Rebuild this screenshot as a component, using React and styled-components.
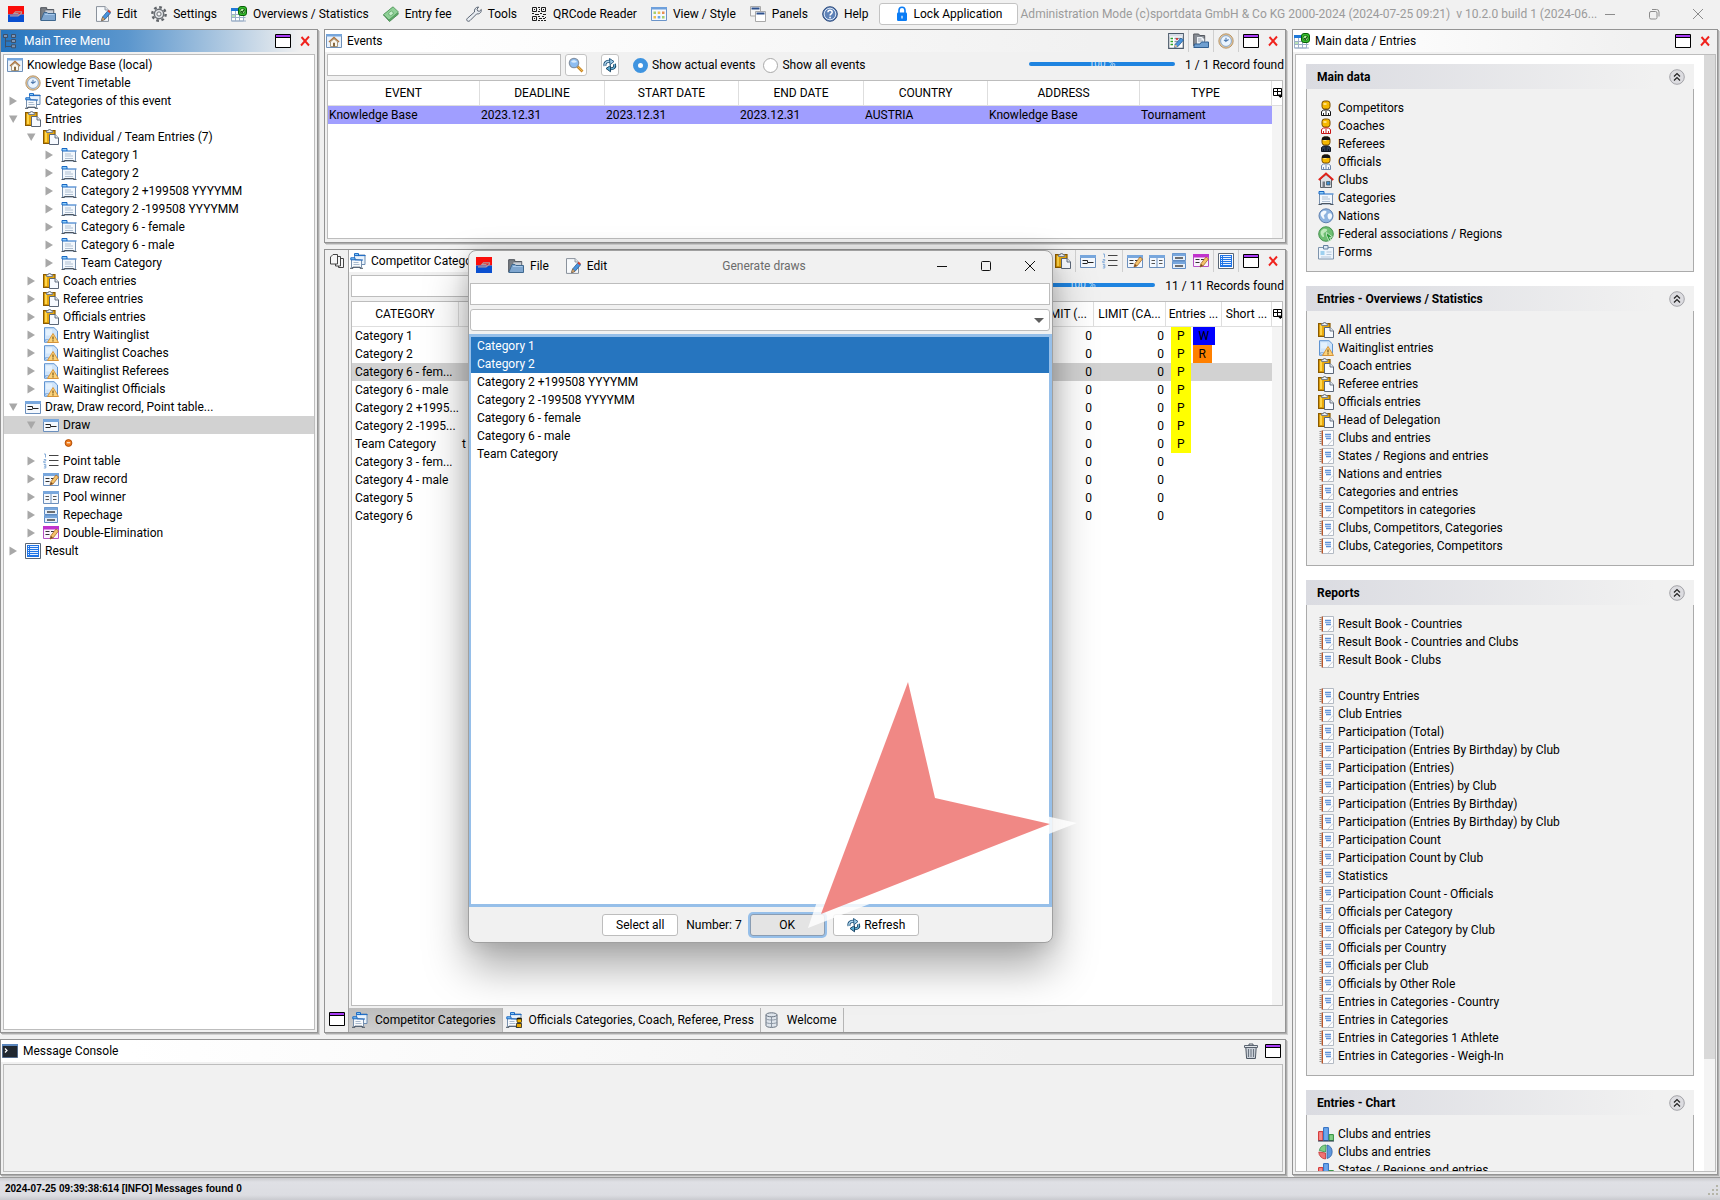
import React, { useState } from 'react';
import styled, { createGlobalStyle, css } from 'styled-components';

const FONT = 'Roboto, "Open Sans", sans-serif';

const GlobalStyle = createGlobalStyle`
    * {
        box-sizing: border-box;
    }
    body {
        margin: 0;
        background: #f1f1f1;
        color: #000;
        font-family: ${FONT};
        font-size: 12px;
        line-height: 18px;
    }
    button, input, select {
        font: inherit;
        color: inherit;
    }
    ul {
        margin: 0;
        padding: 0;
        list-style: none;
    }
`;

/* ---------- icons ---------- */

const pencil = (
    <g>
        <path d="M7 14l1-3.5L13 4l2.5 2L10 13z" fill="#f3c46b" stroke="#a8672a" strokeWidth=".8" />
        <path d="M7 14l1-3 2 1.6z" fill="#7a4a20" />
    </g>
);

const folderShape = (
    <g>
        <path d="M1.500 3v11h13V4.500" fill="#f3f8fd" stroke="#7890ad" />
        <path d="M1 1.500h5v2.500H1z" fill="#8fd0fb" stroke="#1767c4" />
        <path d="M6 4h9.500" stroke="#1767c4" />
        <path d="M4 7h6M4 9h8M4 11.500h8" stroke="#b0c0d2" />
        <path d="M.5 14.500h3v-1h9v1h3" fill="none" stroke="#4b5560" />
    </g>
);

const windowFrame = (color) => (
    <g>
        <path d="M.5 2.500h15v12H.5z" fill="#f4f8fd" stroke="#6b8fbd" />
        <path d="M0 2h16v3H0z" fill={color} />
    </g>
);

const person = (hair, body, detail) => (
    <g>
        <rect x="4" y="1" width="8" height="8" rx="2.500" fill="#f5b800" stroke="#7a4d00" />
        <path d="M5.500 3h3v2h-3z" fill="#ffe07a" />
        {hair && <path d="M4 4V2l2-1.500h4L12 2v2z" fill="#141414" />}
        <path d="M6.500 9.500h3v1h-3z" fill="#b07700" />
        <path d="M3.500 15.500v-4l2-1.500h5l2 1.500v4z" fill={body} stroke={detail} />
        <path d="M8 11v4M5.500 13v2.500M10.500 13v2.500" stroke={detail} strokeWidth=".9" />
    </g>
);

const clipboard = (
    <g>
        <rect x=".6" y="1.600" width="11.400" height="12.800" fill="#e9a90d" stroke="#8a5a00" strokeWidth="1.200" />
        <path d="M2 3h2v10H2z" fill="#ffd54a" />
        <path d="M3.500 3.500V1.800h1.700L5.600.6h2l.4 1.200h1.700v1.700z" fill="#eef2f7" stroke="#6e7784" strokeWidth=".9" />
        <path d="M6.500 5.500h5.500L15.500 9v6.500h-9z" fill="#f7faff" stroke="#5b6677" />
        <path d="M12 5.500V9h3.500" fill="#dfe6f0" stroke="#5b6677" strokeWidth=".9" />
    </g>
);

const categories = (
    <g>
        <path d="M4.500 11.500V2h10.500v9.500z" fill="#eaf3fc" stroke="#6d8db3" />
        <path d="M4.500.6h4v2h-4z" fill="#8fd0fb" stroke="#1767c4" />
        <path d="M8 2.600h7.500" stroke="#1767c4" />
        <path d="M1.500 6v8.500h10V7z" fill="#f7fafd" stroke="#7890ad" />
        <path d="M.8 4.800h4.200v2H.8z" fill="#8fd0fb" stroke="#1767c4" />
        <path d="M5 7h8" stroke="#1767c4" />
        <path d="M3.500 9.500h5M3.500 11.500h6" stroke="#a9bace" />
        <path d="M0 15.300h3v-1.100h7v1.100h3" fill="none" stroke="#4b5560" />
    </g>
);

const shapes = {
    logo: (
        <g>
            <path d="M0 0h16v8.500H0z" fill="#fb0d0a" />
            <path d="M0 8.500h16V16H0z" fill="#0a4fd0" />
            <path d="M2 9.800h8l3.500-2.600V5.800H7.500L5.800 7.600h4.700" fill="none" stroke="#b59a9c" strokeWidth="1.200" />
        </g>
    ),
    folder: (
        <g>
            <path d="M.7 14V1.700h6v1.800h7V8" fill="#7b7f86" stroke="#4c5158" />
            <path d="M5 4h8.500v6H5z" fill="#c9ced6" stroke="#6d737b" strokeWidth=".7" />
            <path d="M.8 14.500L4 6.500h3l1 1h7.500V14.500z" fill="#7fa6cf" stroke="#3f688f" />
            <path d="M5 8.500h9.500" stroke="#a7c9ec" />
        </g>
    ),
    edit: (
        <g>
            <path d="M1.500.6H10l3.500 3.400v11.400h-12z" fill="#f8fafc" stroke="#8a929c" />
            <path d="M10 .6V4h3.500" fill="#dfe5ec" stroke="#8a929c" strokeWidth=".9" />
            <path d="M6.600 14.600l1-3.600 5.600-6.600 2.600 2.200L10 13.400z" fill="#4a94dd" stroke="#2b5d94" strokeWidth=".8" />
            <path d="M12.500 5.200l1.300-1.500 2 1.800-1.200 1.500z" fill="#d9402c" />
            <path d="M6.600 14.600l1-3.600 2.400 2.400z" fill="#f2c48a" stroke="#8d5a27" strokeWidth=".7" />
        </g>
    ),
    gear: (
        <g fill="none">
            <circle cx="8" cy="8" r="6.700" stroke="#5f6368" strokeWidth="2.400" strokeDasharray="2.700 2.560" />
            <circle cx="8" cy="8" r="4.700" fill="#e3e5e8" stroke="#6c7075" strokeWidth="1.500" />
            <circle cx="8" cy="8" r="2.100" fill="#f8f8f8" stroke="#6c7075" />
        </g>
    ),
    overview: (
        <g>
            <path d="M.5 2.500h12v12.500H.5z" fill="#fff" stroke="#9db0c8" />
            <path d="M0 2h13v3H0z" fill="#1f78d8" />
            <path d="M4.500 5v10M8.500 5v10M12.500 9v6M.5 8.500h14M.5 11.500h14M.5 15h14.500" stroke="#9db0c8" />
            <path d="M1 9h3v2H1z" fill="#b9e3b4" />
            <rect x="7.500" y=".5" width="8" height="9" rx="2.500" fill="#35c22b" stroke="#0a5c08" />
            <circle cx="11.500" cy="5" r="2.600" fill="#baf5a6" stroke="#0a5c08" strokeWidth=".8" />
            <path d="M10 5l1.200 1.500L13.300 3.500" fill="none" stroke="#064a05" strokeWidth="1.200" />
        </g>
    ),
    money: (
        <g>
            <path d="M.5 9L9.500 1.500l6 6.500-9 7.500z" fill="#5fae69" stroke="#3e8049" strokeWidth=".8" />
            <path d="M.5 8.500L10 .8l5.500 5.200-9.500 8z" fill="#8fd097" stroke="#4c9457" strokeWidth=".8" />
            <ellipse cx="8" cy="7.400" rx="2.400" ry="2" transform="rotate(-38 8 7.400)" fill="#c5ecca" stroke="#5aa364" strokeWidth=".7" />
        </g>
    ),
    wrench: (
        <path d="M1.200 14.800c-.9-.9-.6-1.800.2-2.500L8.500 6C8 3.500 9.500 1 12.600 1L11 3.200l.6 1.700 1.700.4L15.300 3.500c.4 3-2 4.900-4.500 4.300L4 14.600c-.8.800-2 1-2.800.2z" fill="#e9edf2" stroke="#5a6472" />
    ),
    qr: (
        <g fill="none" stroke="#1c1c1c">
            <path d="M1.500 1.500h4v4h-4zM10.500 1.500h4v4h-4zM1.500 10.500h4v4h-4z" />
            <path d="M3 3.500h1M12 3.500h1M3 12.500h1M7 1.500h2M8 3.500h1M7 5.500h2M1 7.500h2M4 8.500h4M9 7.500h2M12 8.500h3M7 10.500h2M11 10.500h2M14 11.500h1M8 12.500h3M12 12.500h2M7 14.500h2M10 14.500h2M13 14.500h2" />
        </g>
    ),
    view: (
        <g>
            <path d="M.5 1.500h15v13H.5z" fill="#f5f9fe" stroke="#6b94c9" />
            <path d="M0 1h16v2.500H0z" fill="#6ea0dc" />
            <path d="M2.500 5.500H5V8H2.500zM11 10h2.500v2.500H11z" fill="#a6cf6f" />
            <path d="M6.700 5.500h2.600V8H6.700zM2.500 10H5v2.500H2.500z" fill="#f0c04c" />
            <path d="M11 5.500h2.500V8H11z" fill="#e88f4f" />
            <path d="M6.700 10h2.600v2.500H6.700z" fill="#6aa7e8" />
        </g>
    ),
    panels: (
        <g>
            <path d="M.5.500h10v9.500H.5z" fill="#f6f6f6" stroke="#a9a9a9" />
            <path d="M1.500 2.500h8" stroke="#2b4f8c" strokeWidth="2" />
            <path d="M5.500 5.500h10v10h-10z" fill="#fff" stroke="#a9a9a9" />
            <path d="M6.500 7.500h8" stroke="#2b4f8c" strokeWidth="2" />
        </g>
    ),
    help: (
        <g>
            <circle cx="8" cy="8" r="7.300" fill="#5f83b8" stroke="#2c4a7c" />
            <circle cx="8" cy="8" r="5.800" fill="none" stroke="#dbe6f5" />
            <path d="M5.900 6.300C6 4.900 7 4.300 8 4.300c1.200 0 2.200.7 2.200 1.900 0 1.600-2.100 1.600-2.100 3.300" fill="none" stroke="#fff" strokeWidth="1.500" />
            <path d="M7.300 10.800h1.600v1.400H7.300z" fill="#fff" />
        </g>
    ),
    lock: (
        <g>
            <path d="M5 7V4.300C5 2.500 6.300 1.300 8 1.300s3 1.200 3 3V7" fill="none" stroke="#0a7cf5" strokeWidth="1.600" />
            <rect x="3" y="6.500" width="10" height="8.500" rx="1.200" fill="#0a7cf5" />
            <path d="M8 9.800v2.600" stroke="#fff" strokeWidth="1.200" />
        </g>
    ),
    tree: (
        <g>
            <path d="M2.500 3v11.500M2.500 8H9M2.500 13.500H9" fill="none" stroke="#3e5068" />
            <path d="M.5 1.500h4v3h-4zM8.500 1.500h4v3h-4zM8.500 6.500h4v3h-4zM8.500 11.800h4v3h-4z" fill="#7d95b5" stroke="#3e5068" />
        </g>
    ),
    home: (
        <g>
            <path d="M.5 1.500h15v13H.5z" fill="#e9f2fc" stroke="#6f90b8" />
            <path d="M0 1h16v2.500H0z" fill="#76a5da" />
            <path d="M3 9l5-4.500L13 9" fill="none" stroke="#b0743b" strokeWidth="1.500" />
            <path d="M4.500 8.800L8 5.800l3.500 3v4.700h-7z" fill="#fbf7ee" stroke="#93805f" strokeWidth=".8" />
            <path d="M7 9.800h2v3.700H7z" fill="#8a6a3f" />
        </g>
    ),
    clock: (
        <g>
            <circle cx="8" cy="8" r="7.200" fill="#e5c79d" stroke="#a98657" strokeWidth=".8" />
            <circle cx="8" cy="8" r="5.400" fill="#eaf4fe" stroke="#7fa3cc" strokeWidth=".9" />
            <path d="M8 4.800V8.300L10.600 6.500M8 8.300L6 7" fill="none" stroke="#4d78ad" strokeWidth="1.100" />
        </g>
    ),
    categories,
    officialCategories: (
        <g>
            {categories}
            <rect x="11" y="6" width="4.500" height="4.500" rx="1" fill="#f0b400" stroke="#3a2a00" strokeWidth=".8" />
            <path d="M10.500 15.500v-4h5v4z" fill="#e7a600" stroke="#222" strokeWidth=".8" />
            <path d="M11 6h4.500v1.300H11z" fill="#111" />
        </g>
    ),
    clipboard,
    category: folderShape,
    waiting: (
        <g>
            <path d="M1.500.7H11l3.500 3.300v11.300h-13z" fill="#cfe4fa" stroke="#5e93d1" />
            <path d="M3 2.500h6v6H3z" fill="#e4f1fd" />
            <path d="M2.500 12.500h3v1.500h-3z" fill="#eaf4ff" stroke="#5e93d1" strokeWidth=".6" />
            <path d="M10 6.500l5.500 9h-11z" fill="#fbd27a" stroke="#d98f2b" strokeWidth=".9" />
            <path d="M10 9.500v3M10 13.300v1.200" stroke="#6b4a10" strokeWidth="1.100" />
        </g>
    ),
    draw: (
        <g>
            {windowFrame('#78a7dd')}
            <path d="M2.500 7.500h5M2.500 10.500h5M7.500 7.500V9.500h6" fill="none" stroke="#222" />
        </g>
    ),
    list: (
        <g>
            <path d="M1 1h1.500v3.500M.8 6.500h2v1.500h-2v1.700h2M.8 11.500h2v3.500h-2M1 13.200h1.800" fill="none" stroke="#86add9" />
            <path d="M6 2.500h9.500M6 7.500h9.500M6 12.500h9.500" stroke="#444" />
        </g>
    ),
    record: (
        <g>
            {windowFrame('#78a7dd')}
            <path d="M2.500 7.500h4M2.500 10.500h4M8 7.500h3" stroke="#333" />
            {pencil}
        </g>
    ),
    pool: (
        <g>
            {windowFrame('#78a7dd')}
            <path d="M8 5v9.500" stroke="#6b8fbd" />
            <path d="M2.500 7.500h3.500M2.500 10.500h3.500M10 7.500h3.500M10 10.500h3.500" stroke="#555" />
        </g>
    ),
    repechage: (
        <g>
            <path d="M1.500.5h13v7h-13zM1.500 8.500h13v7h-13z" fill="#e4effb" stroke="#5f8cc4" />
            <path d="M1.500.5h13v2.500h-13zM1.500 8.500h13V11h-13z" fill="#78a7dd" />
            <path d="M4 5h8M4 13h8" stroke="#444" strokeWidth="1.600" />
        </g>
    ),
    double: (
        <g>
            <path d="M.5 1.500h15v12H.5z" fill="#fbf3fd" stroke="#b452c4" />
            <path d="M0 1h16v3.500H0z" fill="#c033cc" />
            <path d="M2.500 6.500h4M2.500 9.500h4M8 6.500h3" stroke="#333" />
            {pencil}
        </g>
    ),
    result: (
        <g>
            <path d="M.5.500h15v15H.5z" fill="#fff" stroke="#5a6675" />
            <path d="M2 2h12v12H2z" fill="#1f74e6" />
            <path d="M5 3.500h8M5 5.500h8M5 7.500h8M5 9.500h8M5 11.500h8M3 3.500h1M3 5.500h1M3 7.500h1M3 9.500h1M3 11.500h1" stroke="#fff" strokeWidth=".9" />
        </g>
    ),
    dot: (
        <g>
            <circle cx="7.500" cy="8" r="3.400" fill="#f07a1a" stroke="#a84600" strokeWidth=".9" />
            <path d="M5.800 7.700h3.400" stroke="#ffe3c4" strokeWidth="1.300" />
        </g>
    ),
    search: (
        <g>
            <path d="M9 9l5.500 5.500" stroke="#c9841f" strokeWidth="2.600" />
            <path d="M9.500 9.300l5 5" stroke="#f6c766" strokeWidth=".9" />
            <circle cx="6" cy="6" r="4.700" fill="#8ebdf0" stroke="#8593a5" strokeWidth="1.200" />
            <path d="M3 5c1-2.500 4.500-2.500 6 0-2 1-4 1-6 0z" fill="#d9ebfc" />
        </g>
    ),
    refresh: (
        <g fill="none">
            <path d="M3 9C2.300 5.500 4.500 4 8.500 4.300" stroke="#1c5078" strokeWidth="3" />
            <path d="M3 9C2.300 5.500 4.500 4 8.500 4.300" stroke="#b8dcf2" strokeWidth="1.300" />
            <path d="M7.500 1.500l4.500 3-4 3.300z" fill="#9ccbe8" stroke="#1c5078" strokeWidth=".9" />
            <path d="M12.500 7c1 3.500-1 5-4.500 4.800" stroke="#123c5c" strokeWidth="3" />
            <path d="M12.500 7c1 3.500-1 5-4.500 4.800" stroke="#6bb4d6" strokeWidth="1.300" />
            <path d="M8.500 8.500L4 11.500l4.500 3.300z" fill="#58a8ce" stroke="#123c5c" strokeWidth=".9" />
        </g>
    ),
    tableEdit: (
        <g>
            <path d="M.7.700h14.600v14.600H.7z" fill="#fff" stroke="#4d5b6b" strokeWidth="1.200" />
            <path d="M1 1h14v2.500H1z" fill="#d6dde6" />
            <path d="M2.500 5.500H5M2.500 8.500H5M2.500 11.500H5" stroke="#2ba02b" strokeWidth="1.500" />
            <path d="M6.500 5.500H13M6.500 8.500h4M6.500 11.500h3" stroke="#8895a5" strokeWidth="1.300" />
            <path d="M8 6h2" stroke="#e02020" strokeWidth="1.500" />
            <path d="M6.500 14.500l1-3.500 5.500-6 2.500 2-5.500 6.500z" fill="#4a94dd" stroke="#2b5d94" strokeWidth=".8" />
            <path d="M6.500 14.500l1-3 2 1.700z" fill="#f2c48a" />
        </g>
    ),
    folderDoc: (
        <g>
            <path d="M.7 13V1h5l1 1.500h5V8" fill="#8a8e95" stroke="#54585f" />
            <path d="M3.500 3.500H9l2.500 2.500v6h-8z" fill="#eef1f5" stroke="#79808a" strokeWidth=".8" />
            <path d="M5 6h3.500M5 8h5" stroke="#9ca5b1" />
            <path d="M.8 14.500L1.500 11H7l1.500-2h7v5.500z" fill="#6f9fd0" stroke="#315e8f" />
        </g>
    ),
    window: (
        <g>
            <path d="M.5 1.500h15v13H.5z" fill="#fff" stroke="#000" />
            <path d="M1 2h14v2H1z" fill="#a83cf5" />
            <path d="M1 4.500h14" stroke="#000" />
        </g>
    ),
    cross: <path d="M4.500 4l7.500 8.500M12 3.500L4 12.500" stroke="#f0221c" strokeWidth="1.900" fill="none" />,
    competitor: person(false, '#fff', '#111'),
    coach: person(false, '#fff', '#c81414'),
    referee: person(true, '#2d3b52', '#0d1420'),
    official: person(true, '#f2f6fb', '#6c86ab'),
    club: (
        <g>
            <path d="M2.500 7v8.500h11V7L8 2.500z" fill="#dde1e6" stroke="#5b6269" />
            <path d="M.8 8L8 1.500 15.200 8" fill="none" stroke="#e0231c" strokeWidth="2" />
            <path d="M4.500 9.500H7v6H4.500z" fill="#737b85" />
            <path d="M8.500 9.500H12v3.500H8.500z" fill="#3f8bd0" stroke="#455" strokeWidth=".7" />
        </g>
    ),
    globe: (
        <g>
            <circle cx="8" cy="7.800" r="7" fill="#8fb4e0" stroke="#5e7fae" />
            <path d="M3 4.500C5 2 8 2.500 8.500 3.500S7 6 6 7s1 2 .5 3.500S4.500 10 3.500 8.500 2.500 6 3 4.500zM10 6c1.500-1.500 3.500-1 4 1s-1 4.500-2.500 4.500S9 7.500 10 6z" fill="#f4f9ff" />
        </g>
    ),
    globeGreen: (
        <g>
            <circle cx="8" cy="8" r="7.300" fill="#6fbf73" stroke="#3b8a46" strokeWidth=".9" />
            <path d="M3 5C5 2 8 2.500 9 3.500S7.500 6 6 7s.5 2 0 3.500S4 10.500 3.200 9 2.500 6 3 5z" fill="#bfeabc" />
            <path d="M8.500 9.500V6.500L14.500 11l-3 .5 1.500 3-2 .5-1.200-3z" fill="#2c9c3a" stroke="#e8f7e6" strokeWidth=".7" />
        </g>
    ),
    form: (
        <g>
            <path d="M.5 3.500h15v11.500H.5z" fill="#eef5fc" stroke="#7d93ac" />
            <path d="M5.500 1.500h4.500V5H5.500z" fill="#dde8f4" stroke="#64809f" />
            <path d="M2.500 7h4v4h-4z" fill="#9ed0ef" />
            <path d="M8.500 8h5M8.500 10.500h5M3 13h10" stroke="#b4c7db" />
        </g>
    ),
    report: (
        <g>
            <path d="M4.500.5h11v15h-11z" fill="#fdfdfe" stroke="#b3bac4" />
            <path d="M1.500 1.500h2M1.500 3.500h2M1.500 5.500h2M1.500 7.500h2M1.500 9.500h2M1.500 11.500h2M1.500 13.500h2" stroke="#8e8e8e" />
            <path d="M4.300.5v15" stroke="#b8572c" strokeWidth="1.400" />
            <path d="M7 4.500h6M8 8.500h5" stroke="#5c8fd6" strokeWidth="1.300" />
            <path d="M7 6.500h6" stroke="#7fa9e2" strokeWidth="1.300" />
            <path d="M10 15l5-5.500" stroke="#c3cad4" />
        </g>
    ),
    bars: (
        <g>
            <path d="M.6 5.600h4.300V14.500H.6z" fill="#f58b8b" stroke="#d22f2f" />
            <path d="M5.600 1.600h4.800v13H5.600z" fill="#6da7ee" stroke="#2d6cc0" />
            <path d="M11.100 8.600h4.300v6h-4.300z" fill="#83cf86" stroke="#2f8f3a" />
            <path d="M0 15h16" stroke="#2b3850" />
        </g>
    ),
    pie: (
        <g>
            <path d="M9 8V1a7 7 0 010 13.500z" fill="#5e97dc" stroke="#2f61a5" strokeWidth=".8" />
            <path d="M7.500 8L1.300 6.500A7 7 0 018 1z" fill="#7fce84" stroke="#35904a" strokeWidth=".8" />
            <path d="M7.500 9v6A7 7 0 01.800 8z" fill="#f07272" stroke="#c23434" strokeWidth=".8" />
        </g>
    ),
    trash: (
        <g>
            <path d="M2.800 4.500h10.400l-.8 11H3.600z" fill="#c9cfd7" stroke="#4e5864" />
            <path d="M5.500 6v8M8 6v8M10.500 6v8" stroke="#6a7480" />
            <path d="M1.500 2.500h13v2h-13z" fill="#e3e7ec" stroke="#4e5864" strokeWidth=".9" />
            <path d="M6 2.500V1h4v1.500" fill="none" stroke="#4e5864" />
        </g>
    ),
    terminal: (
        <g>
            <path d="M.5 1.500h15v13H.5z" fill="#20272f" stroke="#51698a" />
            <path d="M0 1h16v2H0z" fill="#5b86bd" />
            <path d="M3 5.500l2 2-2 2" fill="none" stroke="#fff" strokeWidth="1.200" />
        </g>
    ),
    database: (
        <g fill="#dfe5ec" stroke="#66717e">
            <path d="M2 3v10.500c0 2.500 11 2.500 11 0V3" />
            <path d="M2 6.500c0 2 11 2 11 0M2 10c0 2 11 2 11 0M7.500 5v11" fill="none" stroke="#8a95a2" />
            <ellipse cx="7.500" cy="2.800" rx="5.500" ry="2" />
        </g>
    ),
    copies: (
        <g fill="#f6f6f6" stroke="#444">
            <path d="M9.500 5.500h5v9h-5z" />
            <path d="M6.500 3.500h5v9.500h-5z" />
            <path d="M1.500 4L4 1.500h4.500v9.500h-7z" />
        </g>
    ),
    columns: (
        <g>
            <path d="M3.500 3.500h8v7h-8zM3.500 6.500h8M7.500 3.500v7" fill="none" stroke="#000" />
            <path d="M7 9.500h6.500l-3.200 3.500z" fill="#000" />
        </g>
    ),
    minimize: <path d="M3 8.500h10" stroke="currentColor" />,
    restore: (
        <g fill="none" stroke="currentColor">
            <rect x="3.500" y="5.500" width="7.500" height="7.500" rx="1.500" />
            <path d="M6 3.500h4.500a2.500 2.500 0 012.500 2.500v4.500" />
        </g>
    ),
    maximize: <rect x="3.500" y="3.500" width="9" height="9" rx="1" fill="none" stroke="currentColor" />,
    close: <path d="M3 3l10 10M13 3L3 13" stroke="currentColor" fill="none" />,
    collapse: (
        <g fill="none" stroke="#222">
            <circle cx="8" cy="8" r="7.300" fill="#dcdce0" stroke="#a3a3a8" />
            <path d="M5 7.500l3-3 3 3M5 11.500l3-3 3 3" strokeWidth="1.200" />
        </g>
    ),
    open: <path d="M4 4.500h8.500L8.200 12z" fill="#a8a8a8" />,
    closed: <path d="M4.500 3.500v9L12 8z" fill="#a8a8a8" />,
    grip: (
        <g fill="#b5b5a8">
            <path d="M12 4h2v2h-2zM8 8h2v2H8zM12 8h2v2h-2zM4 12h2v2H4zM8 12h2v2H8zM12 12h2v2h-2z" />
        </g>
    ),
};

const Svg = styled.svg`
    display: block;
    flex: none;
    width: 16px;
    height: 16px;
`;

const Icon = ({ name }) => (
    <Svg viewBox="0 0 16 16" aria-hidden="true">{shapes[name]}</Svg>
);

/* ---------- page frame ---------- */

const Page = styled.div`
    display: flex;
    flex-direction: column;
    height: 100vh;
    position: relative;
    overflow: hidden;
`;

const MenuBar = styled.header`
    display: flex;
    align-items: center;
    height: 29px;
    padding: 0 0 2px 8px;
    gap: 16px;
    white-space: nowrap;
`;

const Menu = styled.nav`
    display: flex;
    gap: ${props => props.$wide ? '16px' : '14px'};
`;

const MenuButton = styled.button`
    display: flex;
    align-items: center;
    gap: 6px;
    padding: 0;
    border: 0;
    background: none;
`;

const LockButton = styled.button`
    display: flex;
    align-items: center;
    justify-content: center;
    gap: 4px;
    width: 139px;
    height: 22px;
    padding: 0;
    margin-left: -6px;
    border: 1px solid #c3c3c3;
    border-radius: 3px;
    background: #fff;
`;

const AppTitle = styled.div`
    flex: 1;
    min-width: 0;
    margin: 0 -16px 0 -13px;
    color: #9b9b9b;
    white-space: pre;
`;

const WindowButtons = styled.div`
    display: flex;
    color: ${props => props.$dim ? '#8c8c8c' : '#111'};
`;

const WindowButton = styled.button`
    display: flex;
    align-items: center;
    justify-content: center;
    width: 44px;
    height: 24px;
    padding: 0;
    border: 0;
    background: none;
`;

const Workspace = styled.main`
    display: grid;
    flex: 1;
    min-height: 0;
    grid-template-columns: minmax(0, 1fr) 426px;
    gap: 6px;
    padding: 0 2px 2px 0;
`;

const LeftArea = styled.div`
    display: grid;
    min-height: 0;
    grid-template-rows: minmax(0, 1fr) 136px;
    gap: 6px;
`;

const UpperArea = styled.div`
    display: grid;
    min-height: 0;
    grid-template-columns: 318px minmax(0, 1fr);
    gap: 6px;
`;

const CenterArea = styled.div`
    display: grid;
    min-height: 0;
    grid-template-rows: 214px minmax(0, 1fr);
    gap: 6px;
`;

const StatusBar = styled.footer`
    display: flex;
    align-items: center;
    justify-content: space-between;
    height: 23px;
    padding-left: 5px;
    border-top: 1px solid #999;
    background: linear-gradient(#c9c9cd, #dfe0e5 4px, #dcdde2 17px, #c9cacf);
    font-family: "Liberation Sans", Arial, sans-serif;
    font-size: 10px;
    font-weight: bold;
`;

/* ---------- dock panels ---------- */

const Panel = styled.section`
    display: flex;
    flex-direction: column;
    min-width: 0;
    min-height: 0;
    border: 1px solid #949494;
    box-shadow: 1px 1px 0 #adadad, 2px 2px 0 #d2d2d2;
`;

const PanelHeader = styled.div`
    display: flex;
    flex: none;
    align-items: center;
    height: 22px;
    padding-left: ${props => props.$active ? '2px' : '1px'};
    gap: 5px;
    white-space: nowrap;
    background: linear-gradient(to right, #fff, #fff 10%, #f1f1f1 80%);
    ${props => props.$active && css`
        color: #fff;
        background: linear-gradient(to right, #2675bf, #5b96cd 40%, #f1f1f1 95%);
    `}
`;

const PanelTitle = styled.h2`
    flex: 1;
    margin: 0;
    font-size: 12px;
    font-weight: normal;
`;

const ToolGroup = styled.div`
    display: flex;
    align-self: stretch;
    align-items: center;
    padding: 0 1px;
    & + & {
        border-left: 1px solid #cfcfcf;
    }
`;

const Tools = styled.div`
    display: flex;
    align-self: stretch;
`;

const ToolButton = styled.button`
    display: flex;
    align-items: center;
    justify-content: center;
    width: 22px;
    height: 20px;
    padding: 0;
    border: 0;
    background: none;
`;

const Box = styled.div`
    flex: 1;
    min-height: 0;
    margin: 2px;
    overflow: hidden;
    border: 1px solid #bdbdbd;
    background: ${props => props.$plain ? '#f1f1f1' : '#fff'};
`;

const PanelTools = ({ groups }) => (
    <Tools>
        {groups.map((group, i) => (
            <ToolGroup key={i}>
                {group.map(name => (
                    <ToolButton key={name} type="button" aria-label={name}><Icon name={name} /></ToolButton>
                ))}
            </ToolGroup>
        ))}
    </Tools>
);

/* ---------- tree ---------- */

const TreeList = styled.ul`
    padding: 1px 0;
`;

const TreeRow = styled.li`
    display: flex;
    align-items: center;
    height: 18px;
    gap: 4px;
    padding-left: ${props => props.$depth ? (props.$depth - 1) * 18 : 3}px;
    background: ${props => props.$selected ? '#d2d2d2' : 'none'};
    white-space: nowrap;
`;

const Toggle = styled.span`
    display: flex;
    justify-content: center;
    width: 17px;
`;

const TREE = [
    [0, null, 'home', 'Knowledge Base (local)'],
    [1, null, 'clock', 'Event Timetable'],
    [1, 'closed', 'categories', 'Categories of this event'],
    [1, 'open', 'clipboard', 'Entries'],
    [2, 'open', 'clipboard', 'Individual / Team Entries (7)'],
    [3, 'closed', 'category', 'Category 1'],
    [3, 'closed', 'category', 'Category 2'],
    [3, 'closed', 'category', 'Category 2 +199508 YYYYMM'],
    [3, 'closed', 'category', 'Category 2 -199508 YYYYMM'],
    [3, 'closed', 'category', 'Category 6 - female'],
    [3, 'closed', 'category', 'Category 6 - male'],
    [3, 'closed', 'category', 'Team Category'],
    [2, 'closed', 'clipboard', 'Coach entries'],
    [2, 'closed', 'clipboard', 'Referee entries'],
    [2, 'closed', 'clipboard', 'Officials entries'],
    [2, 'closed', 'waiting', 'Entry Waitinglist'],
    [2, 'closed', 'waiting', 'Waitinglist Coaches'],
    [2, 'closed', 'waiting', 'Waitinglist Referees'],
    [2, 'closed', 'waiting', 'Waitinglist Officials'],
    [1, 'open', 'draw', 'Draw, Draw record, Point table...'],
    [2, 'open', 'draw', 'Draw'],
    [3, null, 'dot', ''],
    [2, 'closed', 'list', 'Point table'],
    [2, 'closed', 'record', 'Draw record'],
    [2, 'closed', 'pool', 'Pool winner'],
    [2, 'closed', 'repechage', 'Repechage'],
    [2, 'closed', 'double', 'Double-Elimination'],
    [1, 'closed', 'result', 'Result'],
];

const TreePanel = () => (
    <Panel>
        <PanelHeader $active>
            <Icon name="tree" />
            <PanelTitle>Main Tree Menu</PanelTitle>
            <PanelTools groups={[['window', 'cross']]} />
        </PanelHeader>
        <Box>
            <TreeList>
                {TREE.map(([depth, state, icon, label], i) => (
                    <TreeRow key={i} $depth={depth} $selected={label === 'Draw'}>
                        {depth > 0 && <Toggle>{state && <Icon name={state} />}</Toggle>}
                        <Icon name={icon} />
                        {label}
                    </TreeRow>
                ))}
            </TreeList>
        </Box>
    </Panel>
);

/* ---------- tables ---------- */

const FilterRow = styled.div`
    display: flex;
    flex: none;
    align-items: center;
    height: 22px;
    margin: ${props => props.$tabbed ? '3px' : '2px'} 1px 4px 2px;
    white-space: nowrap;
`;

const TextInput = styled.input`
    width: ${props => props.$wide ? '100%' : '234px'};
    height: 22px;
    padding: 0 4px;
    border: 1px solid #bdbdbd;
    background: #fff;
    outline: 0;
`;

const SquareButton = styled.button`
    display: flex;
    align-items: center;
    justify-content: center;
    width: ${props => props.$narrow ? '18px' : '22px'};
    height: 22px;
    padding: 0;
    margin-left: ${props => props.$narrow ? '14px' : '4px'};
    border: 1px solid #c3c3c3;
    border-radius: 3px;
    background: #fff;
`;

const RadioLabel = styled.label`
    display: flex;
    align-items: center;
    gap: 4px;
    margin-left: ${props => props.$first ? '14px' : '8px'};
`;

const Radio = styled.input`
    appearance: none;
    width: 15px;
    height: 15px;
    margin: 0;
    border: 1px solid #a9a9a9;
    border-radius: 50%;
    background: #fff;
    &:checked {
        border: 5px solid #3f94e0;
    }
`;

const Progress = styled.div`
    width: 146px;
    height: 4px;
    margin: 0 10px 2px auto;
    overflow: hidden;
    border-radius: 2px;
    background: #1f84e0;
    color: #cfe4f8;
    font-size: 10px;
    line-height: 4px;
    text-align: center;
`;

const TableBox = styled(Box)`
    display: flex;
    margin-top: 0;
    margin-bottom: ${props => props.$tabbed ? '2px' : '3px'};
    flex-direction: column;
    background: linear-gradient(to left, #f4f4f4 10px, #fff 10px);
`;

const Table = styled.table`
    width: 100%;
    table-layout: fixed;
    border-collapse: separate;
    border-spacing: 0;
    th {
        height: 25px;
        padding: 0;
        border-right: 1px solid #dedede;
        border-bottom: 1px solid #dedede;
        background: #fff;
        font-weight: normal;
        white-space: nowrap;
    }
    th:last-child {
        border-right: 0;
    }
    td {
        height: 18px;
        padding: 0 2px;
        overflow: hidden;
        white-space: nowrap;
    }
`;

const EventRow = styled.tr`
    td:not(:last-child) {
        padding-left: 1px;
        background: #a09eff;
    }
`;

const CategoryRow = styled.tr`
    td {
        padding-left: 3px;
    }
    td:not(:last-child) {
        background: ${props => props.$selected ? '#d2d2d2' : 'none'};
    }
`;

const NumberCell = styled.td`
    text-align: right;
`;

const ColumnButton = styled.button`
    display: flex;
    justify-content: center;
    width: 100%;
    padding: 0;
    border: 0;
    background: none;
`;

const Flags = styled.div`
    display: flex;
    gap: 2px;
    padding-left: 2px;
`;

const Flag = styled.span`
    padding: 0 6px;
    background: ${props => props.$color};
`;

const Columns = ({ widths }) => (
    <colgroup>
        {widths.map((width, i) => <col key={i} width={width} />)}
    </colgroup>
);

const EVENT_HEADS = ['EVENT', 'DEADLINE', 'START DATE', 'END DATE', 'COUNTRY', 'ADDRESS', 'TYPE'];
const EVENT_CELLS = ['Knowledge Base', '2023.12.31', '2023.12.31', '2023.12.31', 'AUSTRIA', 'Knowledge Base', 'Tournament'];

const EventsPanel = () => (
    <Panel>
        <PanelHeader>
            <Icon name="home" />
            <PanelTitle>Events</PanelTitle>
            <PanelTools groups={[['tableEdit'], ['folderDoc'], ['clock'], ['window', 'cross']]} />
        </PanelHeader>
        <FilterRow>
            <TextInput type="text" aria-label="Search events" />
            <SquareButton type="button" aria-label="Search"><Icon name="search" /></SquareButton>
            <SquareButton type="button" aria-label="Refresh events" $narrow><Icon name="refresh" /></SquareButton>
            <RadioLabel $first><Radio type="radio" name="events" defaultChecked />Show actual events</RadioLabel>
            <RadioLabel><Radio type="radio" name="events" />Show all events</RadioLabel>
            <Progress role="progressbar" aria-valuenow={100}>100 %</Progress>
            1 / 1 Record found
        </FilterRow>
        <TableBox>
            <Table>
                <Columns widths={[152, 125, 134, 125, 124, 152, 132, 11]} />
                <thead>
                    <tr>
                        {EVENT_HEADS.map(head => <th key={head}>{head}</th>)}
                        <th><ColumnButton type="button" aria-label="Columns"><Icon name="columns" /></ColumnButton></th>
                    </tr>
                </thead>
                <tbody>
                    <EventRow>
                        {EVENT_CELLS.map((cell, i) => <td key={i}>{cell}</td>)}
                        <td />
                    </EventRow>
                </tbody>
            </Table>
        </TableBox>
    </Panel>
);

const SplitBody = styled.div`
    display: flex;
    flex: 1;
    min-height: 0;
`;

const SideStrip = styled.div`
    display: flex;
    flex: none;
    flex-direction: column;
    justify-content: space-between;
    align-items: center;
    width: 24px;
    padding: 1px 0 3px;
    border-right: 1px solid #a5a5a5;
`;

const SplitMain = styled.div`
    display: flex;
    flex: 1;
    flex-direction: column;
    min-width: 0;
`;

const Tabs = styled.div`
    display: flex;
    flex: none;
    height: 24px;
    white-space: nowrap;
`;

const Tab = styled.button`
    display: flex;
    align-items: center;
    gap: 7px;
    padding: 0 6px 0 3px;
    border: 0;
    border-right: 1px solid #b5b5b5;
    background: ${props => props.$selected ? 'linear-gradient(#bdbdbd, #cfcfcf)' : 'none'};
`;

const CATEGORIES = [
    ['Category 1', '', ['P', 'W']],
    ['Category 2', '', ['P', 'R']],
    ['Category 6 - fem...', '', ['P']],
    ['Category 6 - male', '', ['P']],
    ['Category 2 +1995...', '', ['P']],
    ['Category 2 -1995...', '', ['P']],
    ['Team Category', 't', ['P']],
    ['Category 3 - fem...', '', []],
    ['Category 4 - male', '', []],
    ['Category 5', '', []],
    ['Category 6', '', []],
];

const FLAG_COLORS = { P: '#ffff00', W: '#0000ff', R: '#ff8000' };

const CategoryPanel = () => (
    <Panel>
        <SplitBody>
            <SideStrip>
                <ToolButton type="button" aria-label="Tabs"><Icon name="copies" /></ToolButton>
                <ToolButton type="button" aria-label="Maximize"><Icon name="window" /></ToolButton>
            </SideStrip>
            <SplitMain>
                <PanelHeader>
                    <Icon name="categories" />
                    <PanelTitle>Competitor Categories</PanelTitle>
                    <PanelTools
                        groups={[
                            ['clipboard'],
                            ['draw', 'list'],
                            ['record', 'pool', 'repechage', 'double'],
                            ['result'],
                            ['window', 'cross'],
                        ]}
                    />
                </PanelHeader>
                <FilterRow $tabbed>
                    <TextInput type="text" aria-label="Search categories" />
                    <Progress role="progressbar" aria-valuenow={100}>100 %</Progress>
                    11 / 11 Records found
                </FilterRow>
                <TableBox $tabbed>
                    <Table>
                        <Columns widths={[107, 575, 60, 72, 56, 50, 11]} />
                        <thead>
                            <tr>
                                <th>CATEGORY</th>
                                <th />
                                <th>LIMIT (...</th>
                                <th>LIMIT (CA...</th>
                                <th>Entries ...</th>
                                <th>Short ...</th>
                                <th><ColumnButton type="button" aria-label="Columns"><Icon name="columns" /></ColumnButton></th>
                            </tr>
                        </thead>
                        <tbody>
                            {CATEGORIES.map(([name, type, flags], i) => (
                                <CategoryRow key={name} $selected={i === 2}>
                                    <td>{name}</td>
                                    <td>{type}</td>
                                    <NumberCell>0</NumberCell>
                                    <NumberCell>0</NumberCell>
                                    <td>
                                        <Flags>
                                            {flags.map(flag => <Flag key={flag} $color={FLAG_COLORS[flag]}>{flag}</Flag>)}
                                        </Flags>
                                    </td>
                                    <td />
                                    <td />
                                </CategoryRow>
                            ))}
                        </tbody>
                    </Table>
                </TableBox>
                <Tabs>
                    <Tab type="button" $selected><Icon name="categories" />Competitor Categories</Tab>
                    <Tab type="button"><Icon name="officialCategories" />Officials Categories, Coach, Referee, Press</Tab>
                    <Tab type="button"><Icon name="database" />Welcome</Tab>
                </Tabs>
            </SplitMain>
        </SplitBody>
    </Panel>
);

/* ---------- right task pane ---------- */

const ScrollArea = styled(Box)`
    display: flex;
    margin-right: 1px;
`;

const Groups = styled.div`
    display: flex;
    flex: 1;
    flex-direction: column;
    gap: 14px;
    min-width: 0;
    padding: 9px 10px;
`;

const ScrollTrack = styled.div`
    flex: none;
    width: 11px;
    background: linear-gradient(#d9d9d9 90%, #f4f4f4 90%);
`;

const Group = styled.section`
    flex: none;
`;

const GroupHeader = styled.div`
    display: flex;
    align-items: center;
    justify-content: space-between;
    height: 25px;
    padding: 0 9px 0 11px;
    background: linear-gradient(to right, #dadbe1, #f1f1f1 90%);
`;

const GroupTitle = styled.h3`
    margin: 0;
    font-size: 12px;
    font-weight: bold;
`;

const GroupItems = styled.ul`
    padding: 10px 11px;
    border: 1px solid #ababab;
    border-top: 0;
    background: #f1f1f1;
`;

const GroupItem = styled.li`
    height: 18px;
`;

const GroupLink = styled.a`
    display: inline-flex;
    align-items: center;
    gap: 4px;
    height: 18px;
    color: #000;
    text-decoration: none;
`;

const CollapseButton = styled.button`
    padding: 0;
    border: 0;
    background: none;
`;

const report = label => ['report', label];

const GROUPS = [
    ['Main data', [
        ['competitor', 'Competitors'],
        ['coach', 'Coaches'],
        ['referee', 'Referees'],
        ['official', 'Officials'],
        ['club', 'Clubs'],
        ['category', 'Categories'],
        ['globe', 'Nations'],
        ['globeGreen', 'Federal associations / Regions'],
        ['form', 'Forms'],
    ]],
    ['Entries - Overviews / Statistics', [
        ['clipboard', 'All entries'],
        ['waiting', 'Waitinglist entries'],
        ['clipboard', 'Coach entries'],
        ['clipboard', 'Referee entries'],
        ['clipboard', 'Officials entries'],
        ['clipboard', 'Head of Delegation'],
        ...[
            'Clubs and entries',
            'States / Regions and entries',
            'Nations and entries',
            'Categories and entries',
            'Competitors in categories',
            'Clubs, Competitors, Categories',
            'Clubs, Categories, Competitors',
        ].map(report),
    ]],
    ['Reports', [
        report('Result Book - Countries'),
        report('Result Book - Countries and Clubs'),
        report('Result Book - Clubs'),
        null,
        ...[
            'Country Entries',
            'Club Entries',
            'Participation (Total)',
            'Participation (Entries By Birthday) by Club',
            'Participation (Entries)',
            'Participation (Entries) by Club',
            'Participation (Entries By Birthday)',
            'Participation (Entries By Birthday) by Club',
            'Participation Count',
            'Participation Count by Club',
            'Statistics',
            'Participation Count - Officials',
            'Officials per Category',
            'Officials per Category by Club',
            'Officials per Country',
            'Officials per Club',
            'Officials by Other Role',
            'Entries in Categories - Country',
            'Entries in Categories',
            'Entries in Categories 1 Athlete',
            'Entries in Categories - Weigh-In',
        ].map(report),
    ]],
    ['Entries - Chart', [
        ['bars', 'Clubs and entries'],
        ['pie', 'Clubs and entries'],
        ['bars', 'States / Regions and entries'],
    ]],
];

const DataPanel = () => (
    <Panel>
        <PanelHeader>
            <Icon name="overview" />
            <PanelTitle>Main data / Entries</PanelTitle>
            <PanelTools groups={[['window', 'cross']]} />
        </PanelHeader>
        <ScrollArea>
            <Groups>
                {GROUPS.map(([title, items]) => (
                    <Group key={title}>
                        <GroupHeader>
                            <GroupTitle>{title}</GroupTitle>
                            <CollapseButton type="button" aria-label={title}><Icon name="collapse" /></CollapseButton>
                        </GroupHeader>
                        <GroupItems>
                            {items.map((item, i) => (
                                <GroupItem key={i}>
                                    {item && <GroupLink href="#"><Icon name={item[0]} />{item[1]}</GroupLink>}
                                </GroupItem>
                            ))}
                        </GroupItems>
                    </Group>
                ))}
            </Groups>
            <ScrollTrack />
        </ScrollArea>
    </Panel>
);

/* ---------- dialog ---------- */

const Dialog = styled.div`
    position: absolute;
    top: 250px;
    left: 468px;
    display: flex;
    flex-direction: column;
    width: 585px;
    height: 693px;
    border: 1px solid #a0a0a0;
    border-radius: 8px;
    background: #f1f1f1;
    box-shadow: 0 24px 44px rgba(0, 0, 0, .34), 0 0 20px rgba(0, 0, 0, .12);
`;

const DialogHeader = styled.div`
    display: grid;
    grid-template-columns: 1fr auto 1fr;
    align-items: center;
    height: 30px;
    margin-bottom: 2px;
    padding-left: 7px;
    color: #000;
    & > :last-child {
        justify-self: end;
    }
`;

const DialogTitle = styled.h2`
    margin: 0;
    color: #6b6b6b;
    font-size: 12px;
    font-weight: normal;
`;

const DialogFields = styled.div`
    display: flex;
    flex-direction: column;
    gap: 4px;
    padding: 0 2px 3px 1px;
`;

const SelectWrap = styled.div`
    position: relative;
    display: flex;
    &::after {
        content: "";
        position: absolute;
        top: 9px;
        right: 6px;
        border: 5px solid transparent;
        border-top-color: #5f5f5f;
        border-bottom: 0;
        pointer-events: none;
    }
`;

const Select = styled.select`
    appearance: none;
    width: 100%;
    height: 22px;
    padding: 0 20px 0 4px;
    border: 1px solid #bdbdbd;
    border-radius: 3px;
    background: #fff;
    outline: 0;
`;

const Options = styled.ul`
    flex: 1;
    border: 3px solid #96bfe9;
    border-left-width: 2px;
    background: #fff;
`;

const Option = styled.li`
    height: 18px;
    padding-left: 6px;
    cursor: default;
    color: ${props => props.$selected ? '#fff' : '#000'};
    background: ${props => props.$selected ? '#2675bf' : 'none'};
`;

const DialogFooter = styled.div`
    display: flex;
    align-items: center;
    justify-content: center;
    gap: 8px;
    height: 35px;
`;

const DialogButton = styled.button`
    display: flex;
    align-items: center;
    justify-content: center;
    gap: 2px;
    width: ${props => props.$width};
    height: 22px;
    padding: 0;
    border: 1px solid #bdbdbd;
    border-radius: 3px;
    background: #fff;
    ${props => props.$focused && css`
        border-color: #8a9db3;
        background: #e4e4e4;
        box-shadow: 0 0 0 2px #96bfe9;
    `}
`;

const Pointer = styled.svg`
    position: absolute;
    top: 640px;
    left: 799px;
    width: 280px;
    height: 300px;
    pointer-events: none;
`;

const OPTIONS = [
    'Category 1',
    'Category 2',
    'Category 2 +199508 YYYYMM',
    'Category 2 -199508 YYYYMM',
    'Category 6 - female',
    'Category 6 - male',
    'Team Category',
];

const DrawDialog = () => {
    const [selected, setSelected] = useState([0, 1]);

    return (
        <Dialog role="dialog" aria-label="Generate draws">
            <DialogHeader>
                <Menu $wide>
                    <Icon name="logo" />
                    <MenuButton type="button"><Icon name="folder" />File</MenuButton>
                    <MenuButton type="button"><Icon name="edit" />Edit</MenuButton>
                </Menu>
                <DialogTitle>Generate draws</DialogTitle>
                <WindowButtons>
                    <WindowButton type="button" aria-label="Minimize"><Icon name="minimize" /></WindowButton>
                    <WindowButton type="button" aria-label="Maximize"><Icon name="maximize" /></WindowButton>
                    <WindowButton type="button" aria-label="Close"><Icon name="close" /></WindowButton>
                </WindowButtons>
            </DialogHeader>
            <DialogFields>
                <TextInput type="text" aria-label="Filter" $wide />
                <SelectWrap>
                    <Select aria-label="Group"><option value="" /></Select>
                </SelectWrap>
            </DialogFields>
            <Options role="listbox" aria-label="Categories">
                {OPTIONS.map((option, i) => (
                    <Option
                        key={option}
                        role="option"
                        aria-selected={selected.includes(i)}
                        $selected={selected.includes(i)}
                        onClick={() => setSelected([i])}
                    >
                        {option}
                    </Option>
                ))}
            </Options>
            <DialogFooter>
                <DialogButton type="button" $width="76px" onClick={() => setSelected(OPTIONS.map((o, i) => i))}>Select all</DialogButton>
                <span>Number: 7</span>
                <DialogButton type="button" $width="75px" $focused>OK</DialogButton>
                <DialogButton type="button" $width="86px"><Icon name="refresh" />Refresh</DialogButton>
            </DialogFooter>
        </Dialog>
    );
};

const MENU = [
    ['folder', 'File'],
    ['edit', 'Edit'],
    ['gear', 'Settings'],
    ['overview', 'Overviews / Statistics'],
    ['money', 'Entry fee'],
    ['wrench', 'Tools'],
    ['qr', 'QRCode Reader'],
    ['view', 'View / Style'],
    ['panels', 'Panels'],
    ['help', 'Help'],
];

const App = () => (
    <Page>
        <GlobalStyle />
        <MenuBar>
            <Icon name="logo" />
            <Menu>
                {MENU.map(([icon, label]) => (
                    <MenuButton key={label} type="button"><Icon name={icon} />{label}</MenuButton>
                ))}
            </Menu>
            <LockButton type="button"><Icon name="lock" />Lock Application</LockButton>
            <AppTitle>{'Administration Mode (c)sportdata GmbH & Co KG 2000-2024 (2024-07-25 09:21)  v 10.2.0 build 1 (2024-06...'}</AppTitle>
            <WindowButtons $dim>
                <WindowButton type="button" aria-label="Minimize"><Icon name="minimize" /></WindowButton>
                <WindowButton type="button" aria-label="Restore"><Icon name="restore" /></WindowButton>
                <WindowButton type="button" aria-label="Close"><Icon name="close" /></WindowButton>
            </WindowButtons>
        </MenuBar>
        <Workspace>
            <LeftArea>
                <UpperArea>
                    <TreePanel />
                    <CenterArea>
                        <EventsPanel />
                        <CategoryPanel />
                    </CenterArea>
                </UpperArea>
                <Panel>
                    <PanelHeader>
                        <Icon name="terminal" />
                        <PanelTitle>Message Console</PanelTitle>
                        <PanelTools groups={[['trash', 'window']]} />
                    </PanelHeader>
                    <Box $plain />
                </Panel>
            </LeftArea>
            <DataPanel />
        </Workspace>
        <StatusBar>
            2024-07-25 09:39:38:614 [INFO] Messages found 0
            <Icon name="grip" />
        </StatusBar>
        <DrawDialog />
        <Pointer viewBox="0 0 280 300" aria-hidden="true">
            <path d="M9 288L105 5l35 147 138 31z" fill="#fff" fillOpacity=".82" />
            <path d="M22 274L109 42l27 116 115 26z" fill="#ef7e7b" fillOpacity=".92" />
        </Pointer>
    </Page>
);

export default App;
